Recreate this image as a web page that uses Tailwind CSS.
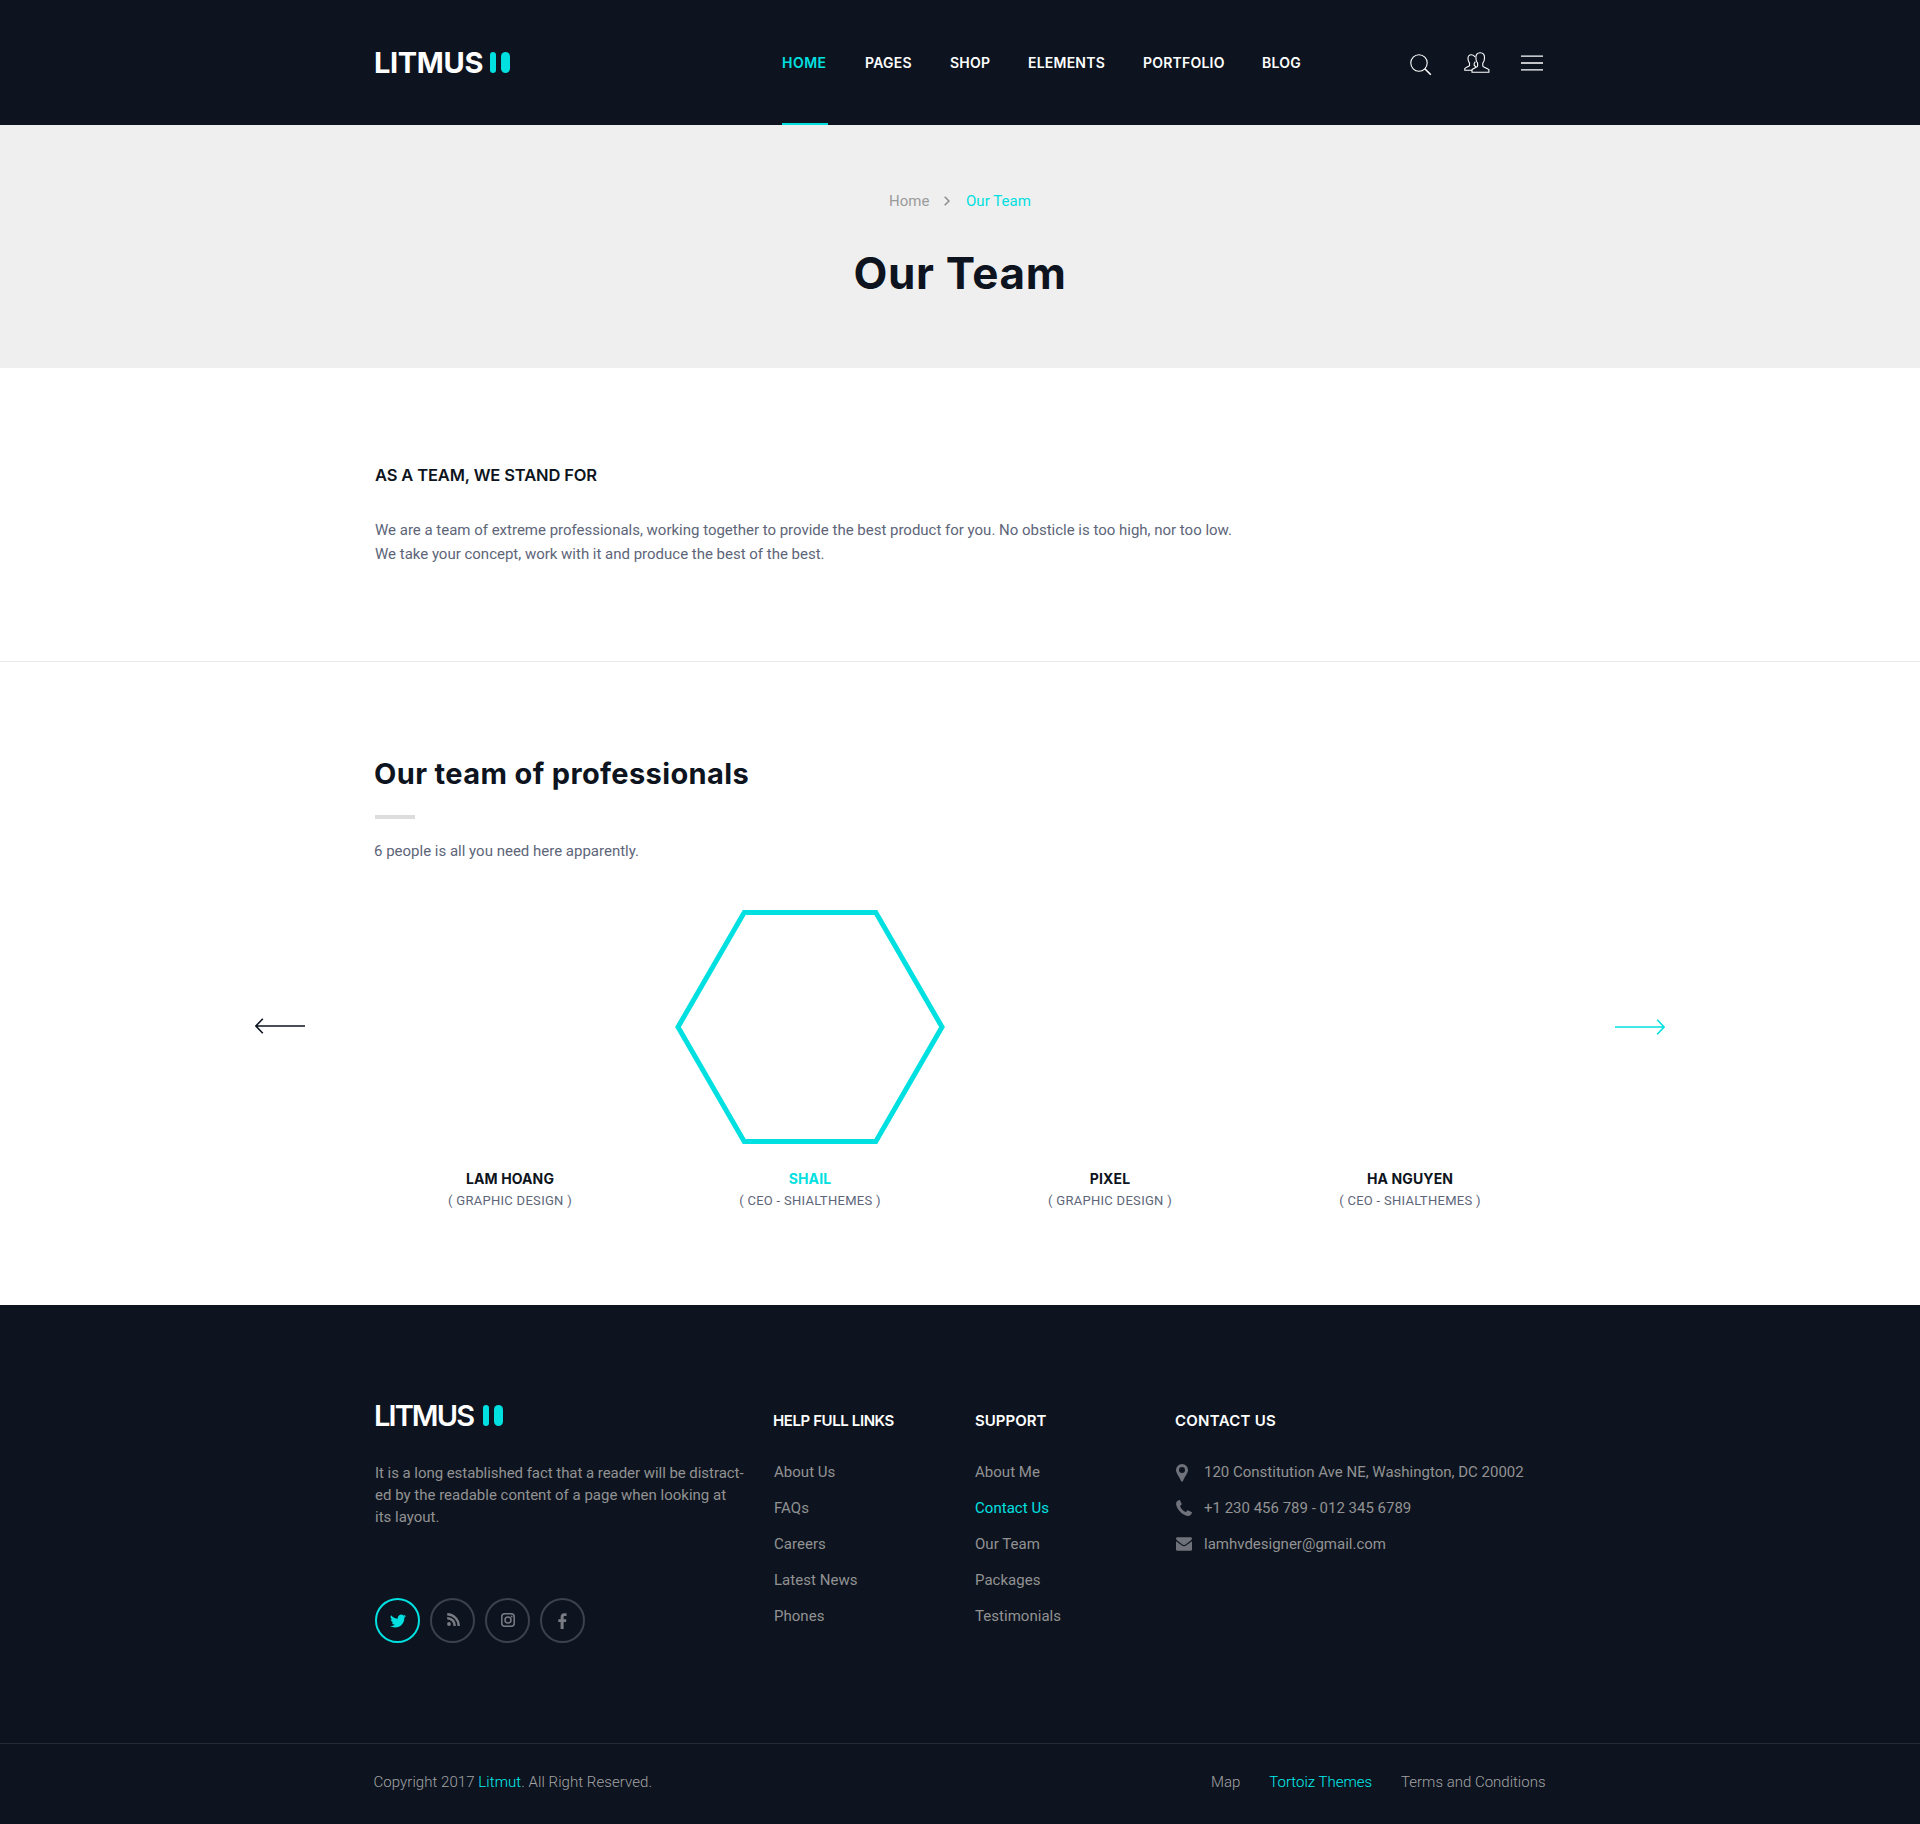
<!DOCTYPE html>
<html lang="en">
<head>
<meta charset="utf-8">
<title>Litmus - Our Team</title>
<script src="https://cdn.jsdelivr.net/npm/@tailwindcss/browser@4"></script>
</head>
<body class="w-[1920px] bg-white font-['Roboto',sans-serif] text-[15px] leading-6 text-[#5d6579]">

<header class="h-[125px] bg-[#0d1420] font-['Inter',sans-serif] text-white">
  <div class="mx-auto flex h-full w-[1170px] items-center">
    <a class="flex w-[407px] items-center" href="#">
      <span class="-ml-px w-[116px] whitespace-nowrap text-[29px] font-bold leading-none tracking-[-0.35px]">LITMUS</span>
      <i class="h-[21px] w-[6px] rounded-full bg-[#00e0e0]"></i>
      <i class="ml-[5px] h-[21px] w-[9px] rounded-full bg-[#00e0e0]"></i>
    </a>
    <nav class="flex h-full w-[628px] items-center whitespace-nowrap text-[14px] font-semibold tracking-[0.22px]">
      <a class="flex h-full w-[46px] items-center border-y-2 border-transparent border-b-[#00e0e0] tracking-[0.5px] text-[#00e0e0]" href="#">HOME</a>
      <a class="ml-[37px] w-[85px]" href="#">PAGES</a>
      <a class="w-[78px]" href="#">SHOP</a>
      <a class="w-[115px]" href="#">ELEMENTS</a>
      <a class="w-[119px]" href="#">PORTFOLIO</a>
      <a href="#">BLOG</a>
    </nav>
    <div class="flex items-center">
      <svg class="mt-[4px] h-[22px] w-[22px]" viewBox="0 0 22 22" fill="none" stroke="#fff"><circle cx="9" cy="9" r="8.2" stroke-width="1.1"/><path d="M14.8 14.8 L20.8 20.8" stroke-width="1.6"/></svg>
      <svg class="ml-8 mt-px h-[22px] w-[26px]" viewBox="0 0 26 22" fill="none" stroke="#fff" stroke-width="1.1"><path d="M8 18.2 H.8 V16.6 C2.4 15 5.2 14.6 5.5 13.6 V11 C4.3 9.8 4 8.2 4 6.8 C3.8 4 5.2 2.800 7.400 2.800 C9.400 2.800 10.400 3.600 10.900 5"/><path d="M8 20.200 V17.600 C10 15.900 13.200 15.400 13.600 14.200 V11.200 C12.200 9.600 11.900 8.200 11.900 6 C11.700 2.600 13.200 .8 16.200 .8 C19.200 .8 20.700 2.600 20.500 6 C20.500 8.200 20.200 9.600 18.800 11.200 V14.200 C19.200 15.400 22.600 15.900 24.900 17.600 V20.200 Z"/><path d="M11.200 9.600 C11 10.600 10.400 11 10.200 11.400 V13.400 L12 14.800"/></svg>
      <svg class="ml-[31px] mt-px h-[16px] w-[22px]" viewBox="0 0 22 16" stroke="#fff" stroke-width="1.3"><path d="M0 1.2H22M0 8H22M0 14.8H22"/></svg>
    </div>
  </div>
</header>

<section class="h-[243px] bg-[#efefef] pt-16">
  <div class="ml-[889px] flex h-6 items-center text-[#9b9b9b]">
    <a class="w-[55px]" href="#">Home</a>
    <svg class="h-[10px] w-[6px]" viewBox="0 0 6 10" fill="none" stroke="#8b8b8b" stroke-width="1.5"><path d="M.7 .7 L5 5 L.7 9.3"/></svg>
    <span class="ml-[16px] tracking-[0.04px] text-[#00e0e0]">Our Team</span>
  </div>
  <h1 class="mt-8 text-center font-['Inter',sans-serif] text-[44px] font-bold leading-[56px] tracking-[0.65px] text-[#0d1420]">Our Team</h1>
</section>

<section class="h-[294px] border-b border-[#e9e9e9] pt-[95px]">
  <div class="mx-auto w-[1170px]">
    <h2 class="font-['Inter',sans-serif] text-[16.5px] font-semibold leading-6 tracking-[-0.13px] text-[#0d1420]">AS A TEAM, WE STAND FOR</h2>
    <p class="mt-[31px] tracking-[-0.008px]">We are a team of extreme professionals, working together to provide the best product for you. No obsticle is too high, nor too low.<br>We take your concept, work with it and produce the best of the best.</p>
  </div>
</section>

<section class="h-[643px] pt-[92px]">
  <div class="mx-auto w-[1170px]">
    <h2 class="-ml-px font-['Inter',sans-serif] text-[29px] font-bold leading-10 tracking-[0.37px] text-[#0d1420]">Our team of professionals</h2>
    <div class="mt-[21px] h-1 w-10 bg-[#dddddd]"></div>
    <p class="-ml-px mt-5">6 people is all you need here apparently.</p>
  </div>
  <div class="mx-auto mt-[47px] flex w-[1410px]">
    <svg class="mt-[108px] h-4 w-[50px]" viewBox="0 0 50 16" fill="none" stroke="#0d1420" stroke-width="1.6"><path d="M.8 8H50M7.8 .8L.9 8L7.8 15.2"/></svg>
    <ul class="ml-[55px] grid w-[1200px] grid-cols-4 text-center text-[13px] leading-5 tracking-[0.29px]">
      <li class="pt-[259px]"><h3 class="font-['Inter',sans-serif] text-[14px] font-bold tracking-[0.12px] text-[#0d1420]">LAM HOANG</h3><p class="mt-0.5">( GRAPHIC DESIGN )</p></li>
      <li><svg class="mx-auto h-[234px] w-[270px]" viewBox="0 0 270 234" fill="none" stroke="#00e0e0" stroke-width="5"><path d="M3 117 L69.2 2.5 H200.8 L267 117 L200.8 231.5 H69.2 Z"/></svg><h3 class="mt-[25px] font-['Inter',sans-serif] text-[14px] font-bold tracking-[0.12px] text-[#00e0e0]">SHAIL</h3><p class="mt-0.5">( CEO - SHIALTHEMES )</p></li>
      <li class="pt-[259px]"><h3 class="font-['Inter',sans-serif] text-[14px] font-bold tracking-[0.12px] text-[#0d1420]">PIXEL</h3><p class="mt-0.5">( GRAPHIC DESIGN )</p></li>
      <li class="pt-[259px]"><h3 class="font-['Inter',sans-serif] text-[14px] font-bold tracking-[0.12px] text-[#0d1420]">HA NGUYEN</h3><p class="mt-0.5">( CEO - SHIALTHEMES )</p></li>
    </ul>
    <svg class="ml-[55px] mt-[109px] h-4 w-[50px]" viewBox="0 0 50 16" fill="none" stroke="#00e0e0" stroke-width="1.6"><path d="M0 8H49.2M42.2 .8L49.1 8L42.2 15.2"/></svg>
  </div>
</section>

<footer class="h-[519px] bg-[#0d1420] text-[#929292]">
  <div class="mx-auto flex h-[438px] w-[1170px] pt-[100px]">
    <div class="w-[398px]">
      <a class="flex h-[21px] items-center text-white" href="#">
        <span class="-ml-px w-[109px] whitespace-nowrap font-['Inter',sans-serif] text-[29px] font-semibold leading-none tracking-[-1.9px]">LITMUS</span>
        <i class="h-[21px] w-[6px] rounded-full bg-[#00e0e0]"></i>
        <i class="ml-[5px] h-[21px] w-[9px] rounded-full bg-[#00e0e0]"></i>
      </a>
      <p class="mt-[36px] leading-[22px]"><span class="tracking-[-0.05px]">It is a long established fact that a reader will be distract-</span><br>ed by the readable content of a page when looking at<br>its layout.</p>
      <div class="mt-[70px] flex gap-[10px] text-[#7a7c83]">
        <a class="flex size-[45px] items-center justify-center rounded-full border-2 border-[#00e0e0] text-[#00e0e0]" href="#"><svg class="ml-px h-[16px] w-[16px]" viewBox="0 0 24 24" fill="currentColor"><path d="M24 4.600a10 10 0 0 1-2.800.8 5 5 0 0 0 2.200-2.700 10 10 0 0 1-3.100 1.200 4.900 4.900 0 0 0-8.400 4.500A14 14 0 0 1 1.700 3.200a4.900 4.900 0 0 0 1.500 6.600 4.900 4.900 0 0 1-2.200-.6 4.900 4.900 0 0 0 3.900 4.900 5 5 0 0 1-2.200.1 4.900 4.900 0 0 0 4.600 3.400A9.900 9.900 0 0 1 0 19.500a14 14 0 0 0 7.500 2.200c9.100 0 14-7.500 14-14v-.6A10 10 0 0 0 24 4.600z"/></svg></a>
        <a class="flex size-[45px] items-center justify-center rounded-full border-2 border-[#3d414b]" href="#"><svg class="mb-[2px] ml-px h-[13px] w-[13px]" viewBox="0 0 13 13" fill="none" stroke="currentColor" stroke-width="2.4"><circle cx="2" cy="11" r="1.9" fill="currentColor" stroke="none"/><path d="M.2 5.200A7.200 7.200 0 0 1 7.600 13M.2 1.300A11.500 11.500 0 0 1 11.700 13"/></svg></a>
        <a class="flex size-[45px] items-center justify-center rounded-full border-2 border-[#3d414b]" href="#"><svg class="mb-px ml-px h-[14px] w-[14px]" viewBox="0 0 14 14" fill="none" stroke="currentColor" stroke-width="1.500"><rect x=".8" y=".8" width="12.400" height="12.400" rx="3"/><circle cx="7" cy="7" r="3"/><circle cx="10.700" cy="3.400" r=".9" fill="currentColor" stroke="none"/></svg></a>
        <a class="flex size-[45px] items-center justify-center rounded-full border-2 border-[#3d414b]" href="#"><svg class="h-[16px] w-[9px]" viewBox="0 0 9 16" fill="currentColor"><path d="M2.600 16V9H.3V6.200H2.600V4C2.600 1.500 4 .2 6.200 .2C7.300 .2 8.200 .3 8.500 .3V3H7C5.900 3 5.600 3.500 5.600 4.300V6.200H8.400L8 9H5.600V16Z"/></svg></a>
      </div>
    </div>
    <div class="w-[202px] pt-[4px]">
      <h4 class="font-['Inter',sans-serif] font-semibold tracking-[-0.4px] text-white">HELP FULL LINKS</h4>
      <ul class="mt-[21px] ml-px leading-9 tracking-[0.03px]"><li>About Us</li><li>FAQs</li><li>Careers</li><li>Latest News</li><li>Phones</li></ul>
    </div>
    <div class="w-[200px] pt-[4px]">
      <h4 class="font-['Inter',sans-serif] font-semibold text-white">SUPPORT</h4>
      <ul class="mt-[21px] leading-9 tracking-[0.03px]"><li>About Me</li><li class="text-[#00e0e0]">Contact Us</li><li>Our Team</li><li>Packages</li><li>Testimonials</li></ul>
    </div>
    <div class="pt-[4px]">
      <h4 class="font-['Inter',sans-serif] font-semibold tracking-[0.27px] text-white">CONTACT US</h4>
      <ul class="mt-[21px] leading-9">
        <li class="flex items-center"><span class="w-[29px]"><svg class="ml-[1px] mt-[1px] h-[18px] w-[12px]" viewBox="0 0 12 18" fill="#6f727a"><path fill-rule="evenodd" d="M6 0A6 6 0 0 1 12 6C12 9 8.500 13 7 17Q6 18.600 5 17C3.500 13 0 9 0 6A6 6 0 0 1 6 0ZM6 3A3 3 0 1 0 6 9A3 3 0 1 0 6 3Z"/></svg></span>120 Constitution Ave NE, Washington, DC 20002</li>
        <li class="flex items-center"><span class="w-[29px]"><svg class="-mt-px ml-[1px] h-[16px] w-[16px]" viewBox="0 0 16 16" fill="#6f727a"><path d="M3.200 .1 C1 .8 0 2 .1 4.200 C.8 9.500 6.500 15.300 11.800 15.900 C14 16 15.400 14.800 15.900 12.800 C16 12.400 15.900 12.100 15.500 11.900 L12.300 10.400 C11.900 10.200 11.600 10.300 11.300 10.600 L10 12.100 C7.500 11.200 4.900 8.600 4 6 L5.400 4.800 C5.700 4.500 5.700 4.200 5.600 3.800 L4.100 .5 C3.900 .1 3.600 0 3.200 .1Z"/></svg></span>+1 230 456 789 - 012 345 6789</li>
        <li class="flex items-center"><span class="w-[29px]"><svg class="ml-[1px] h-[14px] w-[16px]" viewBox="0 0 16 14" fill="#6f727a"><path d="M1.500 .3H14.500Q16 .3 16 1.600Q16 2.700 14.500 3.800L9.500 7.400Q8 8.500 6.500 7.400L1.500 3.800Q0 2.700 0 1.600Q0 .3 1.500 .3Z"/><path d="M0 4.200L6 8.600Q8 9.900 10 8.600L16 4.200V12.400Q16 13.800 14.500 13.800H1.500Q0 13.800 0 12.400Z"/></svg></span>lamhvdesigner@gmail.com</li>
      </ul>
    </div>
  </div>
  <div class="h-[81px] border-t border-[#252c38] pt-[26px] font-light text-[#a3a3a3]">
    <div class="mx-auto flex w-[1171px]">
      <p class="-ml-px tracking-[0.06px]">Copyright 2017 <a class="text-[#00eeee]" href="#">Litmut</a>. All Right Reserved.</p>
      <a class="ml-auto" href="#">Map</a>
      <a class="ml-[29px] text-[#00eeee]" href="#">Tortoiz Themes</a>
      <a class="ml-[29px]" href="#">Terms and Conditions</a>
    </div>
  </div>
</footer>
</body>
</html>
